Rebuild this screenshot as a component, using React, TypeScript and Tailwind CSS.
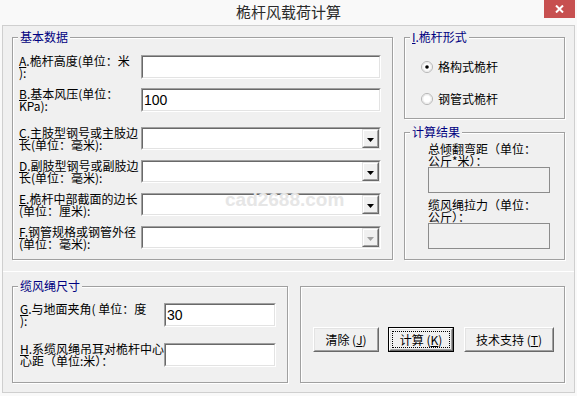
import type { ReactNode } from 'react';

const editRows = [
  { mn: 'A', l1: '.桅杆高度(单位：米', l2: '):', value: '' },
  { mn: 'B', l1: '.基本风压(单位：', l2: 'KPa):', value: '100' },
];

const comboRows = [
  { mn: 'C', l1: '.主肢型钢号或主肢边', l2: '长(单位：毫米):', disabled: false },
  { mn: 'D', l1: '.副肢型钢号或副肢边', l2: '长(单位：毫米):', disabled: false },
  { mn: 'E', l1: '.桅杆中部截面的边长', l2: '(单位：厘米):', disabled: false },
  { mn: 'F', l1: '.钢管规格或钢管外径', l2: '(单位：毫米):', disabled: true },
];

const Group = ({ title, className = '', children }: { title?: ReactNode; className?: string; children?: ReactNode }) => (
  <div className={`relative shrink-0 border border-[#a0a0a0] shadow-[inset_1px_1px_0_#fff,1px_1px_0_#fff] ${className}`}>
    {title && (
      <span className="absolute -top-[8px] left-[5px] bg-[#f0f0f0] px-[2px] text-[12px] leading-[14px] text-[#000080]">
        {title}
      </span>
    )}
    {children}
  </div>
);

const Label = ({ mn, l1, l2, className = '' }: { mn: string; l1: string; l2: string; className?: string }) => (
  <div className={`shrink-0 whitespace-nowrap text-[12px] leading-[12px] text-black ${className}`}>
    <span className="underline underline-offset-[1px]">{mn}</span>
    {l1}
    <br />
    {l2}
  </div>
);

// classic sunken edit box
const Edit = ({ value, className = '' }: { value?: string; className?: string }) => (
  <div className={`shrink-0 border border-t-[#a0a0a0] border-l-[#a0a0a0] border-b-white border-r-white ${className}`}>
    <div className="flex h-full items-center border border-t-[#696969] border-l-[#696969] border-b-[#e3e3e3] border-r-[#e3e3e3] bg-white pl-[1px] font-['Liberation_Sans',sans-serif] text-[14px] text-black">
      {value}
    </div>
  </div>
);

const Combo = ({ disabled }: { disabled?: boolean }) => (
  <div className="h-[23px] w-[240px] shrink-0 border border-t-[#a0a0a0] border-l-[#a0a0a0] border-b-white border-r-white">
    <div className="flex h-full justify-end border border-t-[#696969] border-l-[#696969] border-b-[#e3e3e3] border-r-[#e3e3e3] bg-white">
      <div className="h-full w-[17px] border border-t-[#e3e3e3] border-l-[#e3e3e3] border-b-[#696969] border-r-[#696969]">
        <div className="flex h-full items-center justify-center border border-t-white border-l-white border-b-[#a0a0a0] border-r-[#a0a0a0] bg-[#f0f0f0] pt-[2px]">
          <svg width="7" height="4" viewBox="0 0 7 4">
            <polygon points="0,0 7,0 3.5,4" fill={disabled ? '#a0a0a0' : '#000'} />
          </svg>
        </div>
      </div>
    </div>
  </div>
);

const Radio = ({ checked }: { checked?: boolean }) => (
  <svg width="12" height="12" viewBox="0 0 12 12" className="shrink-0">
    <circle cx="6" cy="6" r="5.5" fill="#fff" stroke="#b4b4b4" />
    <circle cx="6" cy="6" r="4.3" fill="#fff" stroke="#e6e6e6" />
    {checked && <circle cx="6" cy="6" r="1.8" fill="#000" />}
  </svg>
);

const Button = ({ text, mn, focused, className = '' }: { text: string; mn: string; focused?: boolean; className?: string }) => (
  <div className={`relative h-[25px] shrink-0 ${focused ? 'border border-black' : ''} ${className}`}>
    <div className="h-full border border-t-white border-l-white border-b-[#696969] border-r-[#696969]">
      <div className="flex h-full items-center justify-center border border-t-[#e3e3e3] border-l-[#e3e3e3] border-b-[#a0a0a0] border-r-[#a0a0a0] bg-[#f0f0f0] text-[12px] text-black">
        {text} (<span className="underline underline-offset-[1px]">{mn}</span>)
      </div>
    </div>
    {focused && <div className="pointer-events-none absolute inset-[3px] border border-dotted border-black" />}
  </div>
);

export default function App() {
  return (
    <div className="relative h-[396px] w-[577px] overflow-hidden bg-[#f9f9f9] font-['Noto_Sans_CJK_SC','Noto_Sans',sans-serif]">
      {/* title bar */}
      <div className="relative h-[25px] text-center text-[15px] leading-[23px] text-[#2b2b2b]">
        桅杆风载荷计算
        <div className="absolute right-[2px] top-0 flex h-[18px] w-[31px] items-center justify-center bg-[#c75050]">
          <svg width="9" height="8" viewBox="0 0 9 8">
            <path d="M1 0.5 L8 7.5 M8 0.5 L1 7.5" stroke="#fff" strokeWidth="2" />
          </svg>
        </div>
      </div>

      {/* client area */}
      <div className="ml-[2px] flex h-[368px] w-[573px] flex-col border border-[#cfcfcf] bg-[#f0f0f0]">
        <div className="flex h-[245px] shrink-0 pl-[9px] pt-[11px]">
          <Group title="基本数据" className="h-[223px] w-[381px]">
            <div className="flex flex-col pl-[6px] pt-[17px]">
              {editRows.map((r, i) => (
                <div key={r.mn} className={`flex ${i > 0 ? 'mt-[9px]' : ''}`}>
                  <Label mn={r.mn} l1={r.l1} l2={r.l2} className="w-[122px]" />
                  <Edit value={r.value} className="h-[24px] w-[240px]" />
                </div>
              ))}
              {comboRows.map((r, i) => (
                <div key={r.mn} className={`flex ${i === 0 ? 'mt-[15px]' : 'mt-[9px]'}`}>
                  <Label mn={r.mn} l1={r.l1} l2={r.l2} className="w-[122px]" />
                  <Combo disabled={r.disabled} />
                </div>
              ))}
            </div>
          </Group>

          <div className="ml-[11px] flex w-[161px] flex-col">
            <Group
              title={
                <>
                  <span className="underline underline-offset-[1px]">I</span>.桅杆形式
                </>
              }
              className="h-[82px] w-[161px]"
            >
              <div className="flex flex-col pl-[16px] pt-[21px] text-[12px] text-black">
                <div className="flex h-[16px] items-center gap-[5px]">
                  <Radio checked />
                  <span>格构式桅杆</span>
                </div>
                <div className="mt-[16px] flex h-[16px] items-center gap-[5px]">
                  <Radio />
                  <span>钢管式桅杆</span>
                </div>
              </div>
            </Group>

            <Group title="计算结果" className="mt-[13px] h-[128px] w-[161px]">
              <div className="flex flex-col pl-[23px] pt-[10px] text-[12px] leading-[12px] text-black">
                <div className="whitespace-nowrap">
                  总倾翻弯距（单位：
                  <br />
                  公斤*米）：
                </div>
                <div className="h-[26px] w-[122px] border border-[#8c8c8c]" />
                <div className="mt-[6px] whitespace-nowrap">
                  缆风绳拉力（单位：
                  <br />
                  公斤）：
                </div>
                <div className="h-[26px] w-[122px] border border-[#8c8c8c]" />
              </div>
            </Group>
          </div>
        </div>

        <div className="flex flex-1 border-t border-white pl-[9px] pt-[14px]">
          <Group title="缆风绳尺寸" className="h-[97px] w-[276px]">
            <div className="flex flex-col pl-[7px] pt-[16px]">
              <div className="flex">
                <Label mn="G" l1=".与地面夹角( 单位：度" l2="):" className="w-[144px]" />
                <Edit value="30" className="h-[24px] w-[112px]" />
              </div>
              <div className="mt-[16px] flex">
                <Label mn="H" l1=".系缆风绳吊耳对桅杆中心" l2="心距（单位:米）：" className="w-[144px]" />
                <Edit className="h-[24px] w-[112px]" />
              </div>
            </div>
          </Group>

          <Group className="ml-[12px] h-[97px] w-[265px]">
            <div className="flex pl-[12px] pt-[40px]">
              <Button text="清除" mn="J" className="w-[66px]" />
              <Button text="计算" mn="K" focused className="ml-[9px] w-[66px]" />
              <Button text="技术支持" mn="T" className="ml-[10px] w-[90px]" />
            </div>
          </Group>
        </div>
      </div>

      {/* watermark */}
      <div className="pointer-events-none absolute left-[225px] top-[190px] font-['Liberation_Sans',sans-serif] text-[19px] font-bold leading-[19px] text-[#e6e6e6]">
        cad2688.com
      </div>
    </div>
  );
}
